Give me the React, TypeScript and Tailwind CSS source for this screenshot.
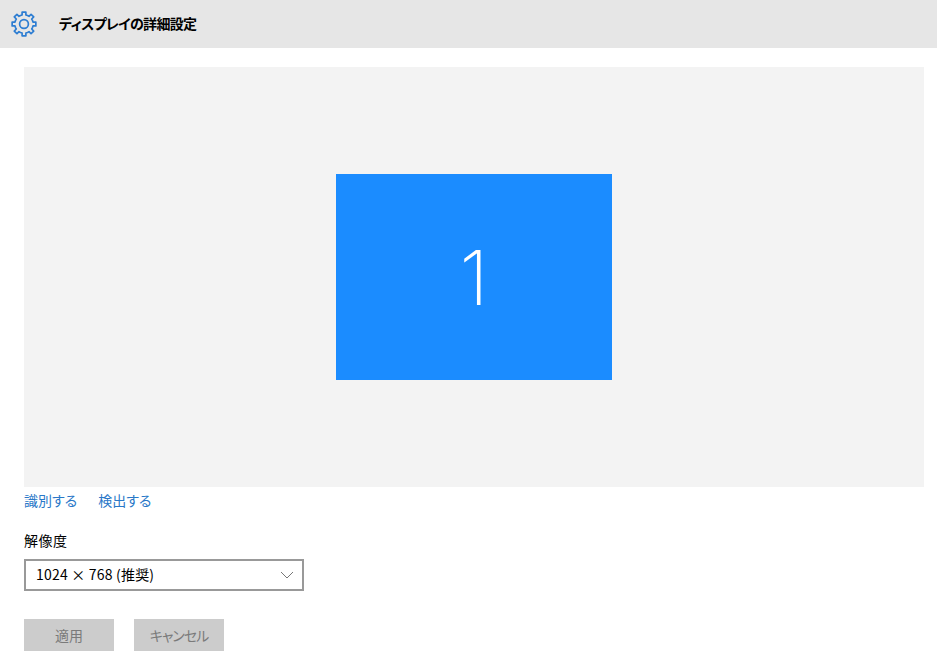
const jp = "font-['Noto_Sans_CJK_JP','Noto_Sans','Liberation_Sans',sans-serif] [font-feature-settings:'palt']";

// 8 toothed gear outline, angles in degrees around the centre
function gearPath() {
    const pts: string[] = [];
    for (let i = 0; i < 8; i++) {
        const a = i * 45;
        [[-22.5, 9.2], [-12, 9.2], [-9, 12], [9, 12], [12, 9.2]].forEach(([d, r]) => {
            const t = ((a + d - 90) * Math.PI) / 180;
            pts.push(`${(13 + r * Math.cos(t)).toFixed(2)} ${(13 + r * Math.sin(t)).toFixed(2)}`);
        });
    }
    return 'M' + pts.join('L') + 'Z';
}

function GearIcon() {
    return (
        <svg width="26" height="26" viewBox="0 0 26 26" fill="none" stroke="#2d7dd2" strokeWidth="1.7" strokeLinejoin="round">
            <path d={gearPath()} />
            <circle cx="13" cy="13" r="4.4" />
        </svg>
    );
}

export default function App() {
    return (
        <div className={`w-[937px] h-[667px] overflow-hidden bg-white text-sm text-black ${jp}`}>
            <header className="h-12 bg-[#e6e6e6] flex items-center pl-[11px]">
                <GearIcon />
                <h1 className="ml-[22px] -mt-[2px] text-sm font-bold leading-5 tracking-[-0.7px]">ディスプレイの詳細設定</h1>
            </header>

            <main className="px-6 pt-[19px]">
                <div className="w-[900px] h-[420px] bg-[#f3f3f3] flex items-center justify-center">
                    <div className="w-[276px] h-[206px] bg-[#1b8cff] flex items-center justify-center">
                        <span className="text-[76px] leading-none font-[250] text-white font-['Inter',sans-serif]">1</span>
                    </div>
                </div>

                <div className="flex gap-[21px] mt-[3px] h-5 leading-5 text-[#2a78c8]">
                    <a>識別する</a>
                    <a>検出する</a>
                </div>

                <label className="block mt-5 leading-5 tracking-[0.5px]">解像度</label>
                <div className="mt-[9px] w-[280px] h-8 border-2 border-[#999999] flex items-center justify-between pl-[10px] pr-2">
                    <span className="leading-5 -mt-[2px] tracking-[0.2px]">1024 × 768 (推奨)</span>
                    <svg width="14" height="8" viewBox="0 0 14 8" fill="none" stroke="#777777" strokeWidth="1">
                        <path d="M1 1l6 6 6-6" />
                    </svg>
                </div>

                <div className="flex gap-5 mt-7">
                    <button className="w-[90px] h-8 bg-[#cccccc] text-[#7a7a7a]">適用</button>
                    <button className="w-[90px] h-8 bg-[#cccccc] text-[#7a7a7a] tracking-[-1px]">キャンセル</button>
                </div>
            </main>
        </div>
    );
}
